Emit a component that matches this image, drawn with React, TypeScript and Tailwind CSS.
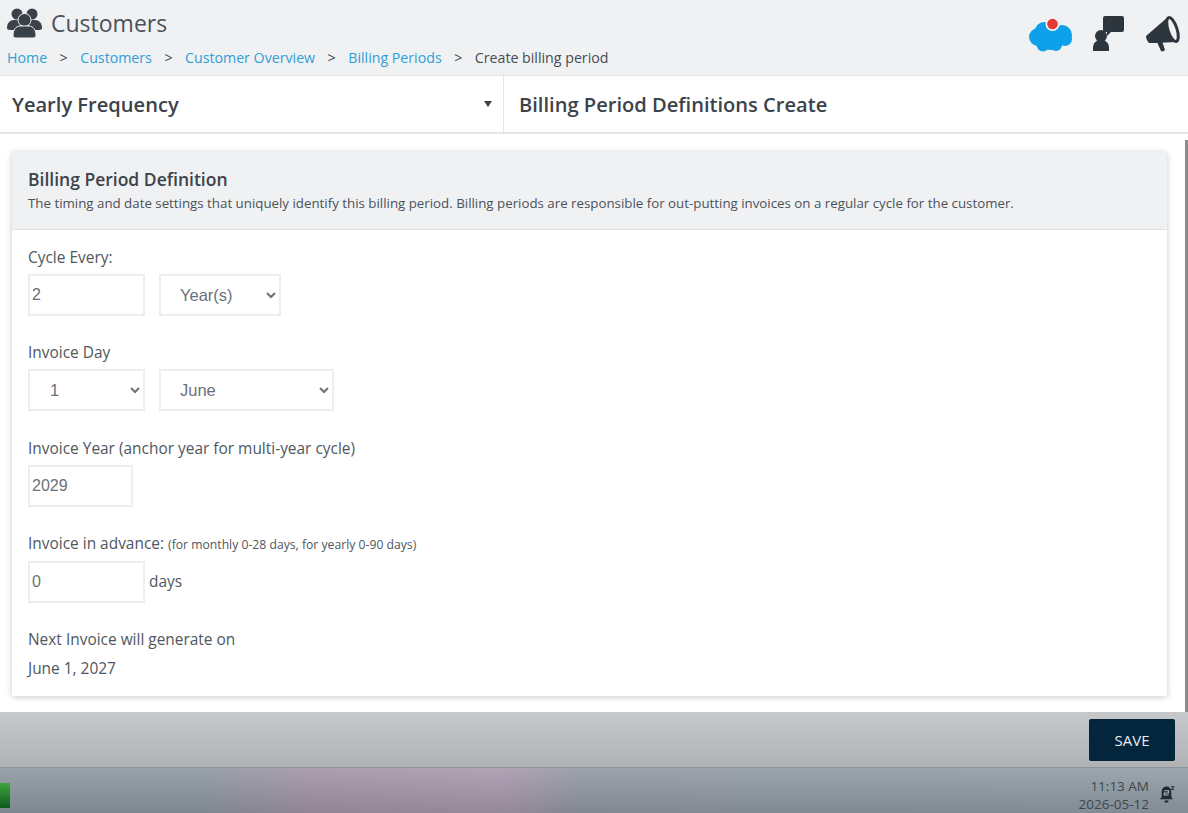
import React from "react";

const ui = "font-['Open_Sans','Noto_Sans',sans-serif]";
const selectCls =
  "h-[42px] border-2 border-[#eceef0] bg-white text-[16.5px] text-[#6b7178] font-['Liberation_Sans',sans-serif] outline-none";
const inputCls =
  "h-[42px] border-2 border-[#eceef0] bg-white px-[2px] text-[16px] text-[#6b7178] font-['Liberation_Sans',sans-serif] outline-none";

function Crumb({ children }: { children: React.ReactNode }) {
  return <span className="text-[#2f9fd6]">{children}</span>;
}
function Sep() {
  return <span className="mx-[12.5px] text-[#444b52]">&gt;</span>;
}

export default function App() {
  return (
    <div className={`${ui} flex h-[813px] w-[1188px] flex-col overflow-hidden bg-white text-[#3f464d]`}>
      <header className="flex h-[76px] shrink-0 items-start justify-between border-b border-[#e4e6e8] bg-[#f0f1f3]">
        <div className="pl-[7px] pt-[6px]">
          <div className="flex h-[34px] items-center gap-[9px]">
            <svg viewBox="0 0 35 30" className="h-[30px] w-[35px]" fill="#3a4148">
              <circle cx="10" cy="6" r="5.500" />
              <circle cx="25" cy="6" r="5.500" />
              <path d="M0 20c0-5 3-8 7-8h6v10H3c-2 0-3-1-3-2z" />
              <path d="M35 20c0-5-3-8-7-8h-6v10h10c2 0 3-1 3-2z" />
              <circle cx="17.500" cy="12" r="6.500" stroke="#f0f1f3" strokeWidth="1" />
              <path d="M9 30c-2 0-3-1-3-3 0-5 3-9 7-9h9c4 0 7 4 7 9 0 2-1 3-3 3z" stroke="#f0f1f3" strokeWidth="1" />
            </svg>
            <span className="text-[23px] leading-none text-[#4b5259]">Customers</span>
          </div>
          <div className="mt-[8px] text-[14.200px] leading-[19px]">
            <Crumb>Home</Crumb>
            <Sep />
            <Crumb>Customers</Crumb>
            <Sep />
            <Crumb>Customer Overview</Crumb>
            <Sep />
            <Crumb>Billing Periods</Crumb>
            <Sep />
            <span className="text-[#454c53]">Create billing period</span>
          </div>
        </div>
        <div className="flex items-start gap-[20px] pr-[8px] pt-[15px]">
          <svg viewBox="0 0 44 37" className="h-[37px] w-[44px]" fill="#0ea0ea">
            <circle cx="9" cy="22" r="9" />
            <circle cx="15" cy="16" r="9" />
            <circle cx="22" cy="24" r="11" />
            <circle cx="33" cy="20" r="10" />
            <circle cx="36" cy="24" r="7" />
            <circle cx="14" cy="30" r="6.500" />
            <circle cx="27" cy="30" r="6" />
            <circle cx="23.500" cy="9" r="7" fill="#f3f4f5" />
            <circle cx="23.500" cy="9" r="5.300" fill="#e23a35" />
          </svg>
          <svg viewBox="0 0 32 37" className="h-[37px] w-[32px]" fill="#2e363d">
            <path d="M12 1h17a2 2 0 0 1 2 2v12a2 2 0 0 1-2 2H18l-4 4v-4h-2a2 2 0 0 1-2-2V3a2 2 0 0 1 2-2z" />
            <circle cx="8" cy="21" r="6" />
            <path d="M0 36v-3c0-5 3-8 8-8s8 3 8 8v3z" />
          </svg>
          <svg viewBox="0 0 35 37" className="h-[37px] w-[35px]">
            <path d="M1 21l22-19 9 25-22 1-6 0c-2-2-3-5-3-7z" fill="#2e363d" />
            <path d="M12 27l5-1 3 9c-1 1-3 2-4 1z" fill="#2e363d" />
            <ellipse cx="27.500" cy="14.500" rx="4.500" ry="12.500" transform="rotate(-18 27.500 14.500)" fill="#f0f1f3" stroke="#2e363d" strokeWidth="3" />
          </svg>
        </div>
      </header>

      <div className="flex h-[58px] shrink-0 border-b-2 border-[#e4e6e8] bg-white">
        <div className="flex w-[504px] items-center justify-between border-r border-[#e4e6e8] pl-[12px] pr-[11px]">
          <span className="translate-y-[1px] text-[20.100px] font-semibold text-[#3c434a]">Yearly Frequency</span>
          <span className="h-0 w-0 border-x-[4px] border-t-[6px] border-x-transparent border-t-[#3c434a]" />
        </div>
        <div className="flex flex-1 items-center pl-[15px]">
          <span className="translate-y-[1px] text-[20.100px] font-semibold text-[#3c434a]">Billing Period Definitions Create</span>
        </div>
      </div>

      <main className="relative flex-1 bg-white px-[12px] pt-[18px]">
        <div className="absolute bottom-0 right-0 top-[6px] w-[3px] bg-[#8c8c8c]" />
        <section className="h-[544px] w-[1155px] bg-white shadow-[0_1px_6px_rgba(0,0,0,0.22)]">
          <div className="h-[78px] border-b border-[#dfe1e3] bg-[#f0f1f3] px-[16px] pt-[15px]">
            <h2 className="text-[17.500px] font-semibold leading-[24px] text-[#3c434a]">Billing Period Definition</h2>
            <p className="mt-[3px] text-[13.300px] leading-[18px] text-[#4a5158]">
              The timing and date settings that uniquely identify this billing period. Billing periods are responsible for out-putting invoices on a regular cycle for the customer.
            </p>
          </div>
          <div className="px-[16px] pt-[17px] text-[15.450px] text-[#50575e]">
            <label className="block leading-[21px]">Cycle Every:</label>
            <div className="mt-[6px] flex gap-[14px]">
              <input readOnly value="2" className={`${inputCls} w-[117px]`} />
              <select defaultValue="y" className={`${selectCls} w-[122px] pl-[15px]`}>
                <option value="y">Year(s)</option>
              </select>
            </div>

            <label className="mt-[26px] block leading-[21px]">Invoice Day</label>
            <div className="mt-[6px] flex gap-[14px]">
              <select defaultValue="1" className={`${selectCls} w-[117px] pl-[16px]`}>
                <option value="1">1</option>
              </select>
              <select defaultValue="june" className={`${selectCls} w-[175px] pl-[15px]`}>
                <option value="june">June</option>
              </select>
            </div>

            <label className="mt-[27px] block leading-[21px]">Invoice Year (anchor year for multi-year cycle)</label>
            <input readOnly value="2029" className={`${inputCls} mt-[6px] block w-[105px]`} />

            <div className="mt-[26px] leading-[21px]">
              Invoice in advance: <span className="text-[12.200px]">(for monthly 0-28 days, for yearly 0-90 days)</span>
            </div>
            <div className="mt-[6px] flex items-center gap-[4px]">
              <input readOnly value="0" className={`${inputCls} w-[117px]`} />
              <span>days</span>
            </div>

            <div className="mt-[26px] leading-[21px]">Next Invoice will generate on</div>
            <div className="mt-[8px] leading-[21px]">June 1, 2027</div>
          </div>
        </section>
      </main>

      <div className="flex h-[56px] shrink-0 items-center justify-end border-b border-[#8a949c] bg-gradient-to-b from-[#c6c8ca] to-[#b0b2b3] pr-[13px]">
        <button className="mt-[1px] h-[42px] w-[86px] rounded-[2px] bg-[#04263c] text-[15px] text-[#e8ecef]">SAVE</button>
      </div>

      <footer className="relative flex h-[45px] shrink-0 items-center justify-end bg-[linear-gradient(180deg,rgba(255,255,255,0.08),rgba(0,0,0,0.12)),linear-gradient(90deg,#8f9aa3_0%,#8f9aa3_17%,#a596a8_26%,#ab9bb0_42%,#939ba5_49%,#939fa8_100%)] pr-[13px]">
        <div className="absolute bottom-[5px] left-0 h-[25px] w-[10px] bg-gradient-to-b from-[#3ea63c] to-[#0f5a1e]" />
        <div className="mt-[8px] text-right text-[13.500px] leading-[18px] text-[#3f464c]">
          <div>11:13 AM</div>
          <div>2026-05-12</div>
        </div>
        <svg viewBox="0 1 15 18" className="ml-[10px] mt-[6px] h-[20px] w-[16px]">
          <path d="M7 3C4 3 2.500 5.500 2.500 8.500v4L1 15h12l-1.500-2.500v-4C11.500 5.500 10 3 7 3z" fill="#22292f" />
          <rect x="5" y="16" width="4" height="2" rx="1" fill="#22292f" />
          <path d="M5 7h4v2H5v2h4" fill="none" stroke="#b7bec4" strokeWidth="1" />
          <text x="11" y="6" fontSize="7" fontWeight="700" fill="#22292f" fontFamily="'Liberation Sans',sans-serif">z</text>
        </svg>
      </footer>
    </div>
  );
}
